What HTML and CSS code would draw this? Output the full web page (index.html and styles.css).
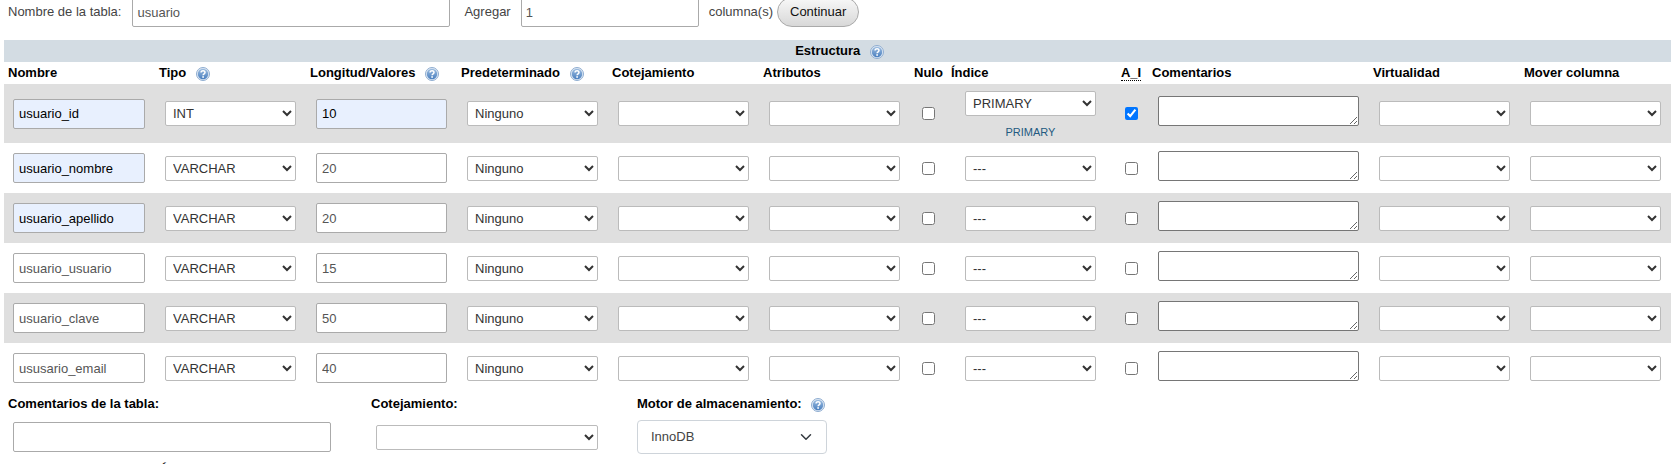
FILE: index.html
```html
<!DOCTYPE html>
<html lang="es">
<head>
<meta charset="utf-8">
<title>Crear tabla</title>
<link rel="stylesheet" href="styles.css">
</head>
<body>
<svg width="0" height="0" class="defs" aria-hidden="true">
  <defs>
    <linearGradient id="ball" x1="0" y1="0" x2="0" y2="1">
      <stop offset="0" stop-color="#9dbde0"/>
      <stop offset="1" stop-color="#4a7fbf"/>
    </linearGradient>
    <symbol id="help" viewBox="0 0 14 14">
      <circle cx="7" cy="7" r="6.5" fill="#dfe9f4" stroke="#8fadd0"/>
      <circle cx="7" cy="7" r="5.2" fill="url(#ball)"/>
      <path d="M5.1 5.5C5.1 3.2 9 3.3 9 5.5C9 6.8 7.1 6.8 7.1 8.3" fill="none" stroke="#fff" stroke-width="1.5"/>
      <rect x="6.3" y="9.2" width="1.6" height="1.6" fill="#fff"/>
    </symbol>
  </defs>
</svg>
<form class="page">
  <div class="toolbar">
    <label for="table">Nombre de la tabla:</label>
    <input class="text table-name" id="table" type="text" value="usuario">
    <label for="num">Agregar</label>
    <input class="text add-count" id="num" type="text" value="1">
    <label for="num">columna(s)</label>
    <button class="go" type="button">Continuar</button>
  </div>

  <table class="columns">
    <colgroup>
      <col class="wide"><col class="wide"><col class="wide"><col class="wide"><col class="wide"><col class="wide">
      <col class="null"><col class="index"><col class="ai"><col class="comments"><col class="wide"><col class="wide">
    </colgroup>
    <thead>
      <tr class="title"><th colspan="12">Estructura <svg class="help"><use href="#help"/></svg></th></tr>
      <tr>
        <th>Nombre</th>
        <th>Tipo <svg class="help"><use href="#help"/></svg></th>
        <th>Longitud/Valores <svg class="help"><use href="#help"/></svg></th>
        <th>Predeterminado <svg class="help"><use href="#help"/></svg></th>
        <th>Cotejamiento</th>
        <th>Atributos</th>
        <th>Nulo</th>
        <th>Índice</th>
        <th class="center"><abbr title="AUTO_INCREMENT">A_I</abbr></th>
        <th>Comentarios</th>
        <th>Virtualidad</th>
        <th>Mover columna</th>
      </tr>
    </thead>
    <tbody>
      <tr class="first">
        <td><input class="text filled" type="text" value="usuario_id" aria-label="Nombre"></td>
        <td><select aria-label="Tipo"><option>INT</option></select></td>
        <td><input class="text filled" type="text" value="10" aria-label="Longitud"></td>
        <td><select aria-label="Predeterminado"><option>Ninguno</option></select></td>
        <td><select aria-label="Cotejamiento"><option></option></select></td>
        <td><select aria-label="Atributos"><option></option></select></td>
        <td class="check"><input type="checkbox" aria-label="Nulo"></td>
        <td class="key"><select aria-label="Índice"><option>PRIMARY</option></select><a href="#">PRIMARY</a></td>
        <td class="check"><input type="checkbox" checked aria-label="A_I"></td>
        <td class="note"><textarea rows="1" aria-label="Comentarios"></textarea></td>
        <td><select aria-label="Virtualidad"><option></option></select></td>
        <td><select aria-label="Mover columna"><option></option></select></td>
      </tr>
      <tr>
        <td><input class="text filled" type="text" value="usuario_nombre" aria-label="Nombre"></td>
        <td><select aria-label="Tipo"><option>VARCHAR</option></select></td>
        <td><input class="text" type="text" value="20" aria-label="Longitud"></td>
        <td><select aria-label="Predeterminado"><option>Ninguno</option></select></td>
        <td><select aria-label="Cotejamiento"><option></option></select></td>
        <td><select aria-label="Atributos"><option></option></select></td>
        <td class="check"><input type="checkbox" aria-label="Nulo"></td>
        <td class="key"><select aria-label="Índice"><option>---</option></select></td>
        <td class="check"><input type="checkbox" aria-label="A_I"></td>
        <td class="note"><textarea rows="1" aria-label="Comentarios"></textarea></td>
        <td><select aria-label="Virtualidad"><option></option></select></td>
        <td><select aria-label="Mover columna"><option></option></select></td>
      </tr>
      <tr>
        <td><input class="text filled" type="text" value="usuario_apellido" aria-label="Nombre"></td>
        <td><select aria-label="Tipo"><option>VARCHAR</option></select></td>
        <td><input class="text" type="text" value="20" aria-label="Longitud"></td>
        <td><select aria-label="Predeterminado"><option>Ninguno</option></select></td>
        <td><select aria-label="Cotejamiento"><option></option></select></td>
        <td><select aria-label="Atributos"><option></option></select></td>
        <td class="check"><input type="checkbox" aria-label="Nulo"></td>
        <td class="key"><select aria-label="Índice"><option>---</option></select></td>
        <td class="check"><input type="checkbox" aria-label="A_I"></td>
        <td class="note"><textarea rows="1" aria-label="Comentarios"></textarea></td>
        <td><select aria-label="Virtualidad"><option></option></select></td>
        <td><select aria-label="Mover columna"><option></option></select></td>
      </tr>
      <tr>
        <td><input class="text" type="text" value="usuario_usuario" aria-label="Nombre"></td>
        <td><select aria-label="Tipo"><option>VARCHAR</option></select></td>
        <td><input class="text" type="text" value="15" aria-label="Longitud"></td>
        <td><select aria-label="Predeterminado"><option>Ninguno</option></select></td>
        <td><select aria-label="Cotejamiento"><option></option></select></td>
        <td><select aria-label="Atributos"><option></option></select></td>
        <td class="check"><input type="checkbox" aria-label="Nulo"></td>
        <td class="key"><select aria-label="Índice"><option>---</option></select></td>
        <td class="check"><input type="checkbox" aria-label="A_I"></td>
        <td class="note"><textarea rows="1" aria-label="Comentarios"></textarea></td>
        <td><select aria-label="Virtualidad"><option></option></select></td>
        <td><select aria-label="Mover columna"><option></option></select></td>
      </tr>
      <tr>
        <td><input class="text" type="text" value="usuario_clave" aria-label="Nombre"></td>
        <td><select aria-label="Tipo"><option>VARCHAR</option></select></td>
        <td><input class="text" type="text" value="50" aria-label="Longitud"></td>
        <td><select aria-label="Predeterminado"><option>Ninguno</option></select></td>
        <td><select aria-label="Cotejamiento"><option></option></select></td>
        <td><select aria-label="Atributos"><option></option></select></td>
        <td class="check"><input type="checkbox" aria-label="Nulo"></td>
        <td class="key"><select aria-label="Índice"><option>---</option></select></td>
        <td class="check"><input type="checkbox" aria-label="A_I"></td>
        <td class="note"><textarea rows="1" aria-label="Comentarios"></textarea></td>
        <td><select aria-label="Virtualidad"><option></option></select></td>
        <td><select aria-label="Mover columna"><option></option></select></td>
      </tr>
      <tr>
        <td><input class="text" type="text" value="ususario_email" aria-label="Nombre"></td>
        <td><select aria-label="Tipo"><option>VARCHAR</option></select></td>
        <td><input class="text" type="text" value="40" aria-label="Longitud"></td>
        <td><select aria-label="Predeterminado"><option>Ninguno</option></select></td>
        <td><select aria-label="Cotejamiento"><option></option></select></td>
        <td><select aria-label="Atributos"><option></option></select></td>
        <td class="check"><input type="checkbox" aria-label="Nulo"></td>
        <td class="key"><select aria-label="Índice"><option>---</option></select></td>
        <td class="check"><input type="checkbox" aria-label="A_I"></td>
        <td class="note"><textarea rows="1" aria-label="Comentarios"></textarea></td>
        <td><select aria-label="Virtualidad"><option></option></select></td>
        <td><select aria-label="Mover columna"><option></option></select></td>
      </tr>
    </tbody>
  </table>

  <div class="options">
    <div class="field comment-field">
      <label for="comment">Comentarios de la tabla:</label>
      <div class="control"><input class="text" id="comment" type="text"></div>
    </div>
    <div class="field collation-field">
      <label for="collation">Cotejamiento:</label>
      <div class="control"><select id="collation"><option></option></select></div>
    </div>
    <div class="field engine-field">
      <label for="engine">Motor de almacenamiento: <svg class="help"><use href="#help"/></svg></label>
      <div class="control engine">
        <select id="engine"><option>InnoDB</option></select>
        <svg class="chevron" viewBox="0 0 16 16"><path d="M2 5l6 6 6-6" fill="none" stroke="#343a40" stroke-width="2" stroke-linecap="round" stroke-linejoin="round"/></svg>
      </div>
    </div>
  </div>
  <div class="partition">Definición de la PARTICIÓN:</div>
</form>
</body>
</html>
```

FILE: styles.css
```css
* {
  box-sizing: border-box;
}

body {
  margin: 0;
  height: 100vh;
  overflow: hidden;
  background: #fff;
  color: #444;
  font: 13px/18px "Liberation Sans", Arial, sans-serif;
}

.defs {
  position: absolute;
}

.page {
  padding-left: 4px;
}

input,
select,
textarea,
button {
  font: inherit;
  margin: 0;
}

.text {
  height: 30px;
  padding: 0 5px;
  border: 1px solid #aaa;
  border-radius: 2px;
  background: #fff;
  color: #555;
}

.filled {
  background: #e8f0fe;
  color: #000;
}

select {
  height: 25px;
  padding: 0 0 0 3px;
  border: 1px solid #bbb;
  border-radius: 2px;
  background: #fff;
  color: #333;
}

/* The toolbar is scrolled slightly past the top edge. */
.toolbar {
  display: flex;
  align-items: center;
  margin-top: -3px;
  padding-left: 4px;
}

.table-name {
  width: 318px;
  margin: 0 14px 0 11px;
  padding: 0 4px;
}

.add-count {
  width: 178px;
  margin: 0 10px;
  padding: 0 4px;
}

.go {
  height: 30px;
  margin-left: 4px;
  padding: 0 12px;
  border: 1px solid #aaa;
  border-radius: 15px;
  background: linear-gradient(#f8f8f8, #d8d8d8);
  color: #111;
}

.columns {
  width: 100%;
  margin-top: 13px;
  table-layout: fixed;
  border-collapse: collapse;
}

.wide {
  width: 151px;
}

.null {
  width: 37px;
}

.index {
  width: 167px;
}

.ai {
  width: 34px;
}

.comments {
  width: 221px;
}

th {
  height: 22px;
  padding: 0 0 0 4px;
  color: #000;
  text-align: left;
  white-space: nowrap;
}

.title th {
  background: #d3dce3;
  text-align: center;
}

th.center {
  padding: 0;
  text-align: center;
}

.help {
  width: 14px;
  height: 14px;
  margin-left: 6px;
  vertical-align: -4px;
}

abbr {
  text-decoration: none;
  border-bottom: 1px dotted #000;
}

td {
  height: 50px;
  padding: 0 10px;
  vertical-align: middle;
}

td:first-child {
  padding-left: 9px;
}

.first td {
  height: 59px;
}

tbody tr:nth-child(odd) {
  background: #dfdfdf;
}

td .text,
td select,
td textarea {
  display: block;
  width: 100%;
}

td.check {
  padding: 0;
}

.check input {
  display: block;
  width: 13px;
  height: 13px;
  margin: 0 auto;
}

td.key {
  padding: 0 18px;
}

.first .key {
  padding-top: 4px;
}

.key a {
  display: block;
  padding-top: 7px;
  color: #235a81;
  font-size: 11px;
  text-align: center;
  text-decoration: none;
}

td.note {
  padding-bottom: 5px;
}

textarea {
  height: 30px;
  border: 1px solid #767676;
  border-radius: 2px;
}

.options {
  display: flex;
  align-items: flex-start;
}

.field {
  padding: 0 4px;
}

.field label {
  display: block;
  height: 22px;
  line-height: 22px;
  color: #000;
  font-weight: bold;
}

.control {
  display: flex;
  align-items: center;
  height: 34px;
  margin-top: 5px;
  padding-left: 5px;
}

.comment-field {
  width: 363px;
}

.comment-field .text {
  width: 318px;
}

.collation-field {
  width: 266px;
}

.collation-field select {
  width: 222px;
}

.engine {
  position: relative;
  width: 190px;
  padding: 0;
}

.engine select {
  width: 100%;
  height: 34px;
  padding: 0 36px 0 13px;
  border-color: #ced4da;
  border-radius: 4px;
  color: #444;
  appearance: none;
}

.chevron {
  position: absolute;
  right: 15px;
  width: 12px;
  height: 12px;
  pointer-events: none;
}

.partition {
  padding: 7px 4px;
  color: #000;
  font-weight: bold;
}
```
